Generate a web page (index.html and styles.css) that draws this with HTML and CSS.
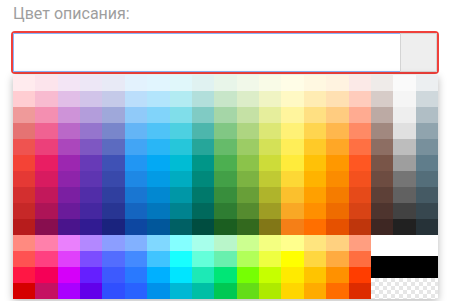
FILE: index.html
```html
<!DOCTYPE html>
<html lang="ru">
<head>
  <meta charset="UTF-8">
  <meta name="viewport" content="width=device-width, initial-scale=1.0">
  <title>Цвет описания</title>
  <link rel="stylesheet" href="styles.css">
</head>
<body>
  <!-- Color field -->
  <div class="color-field">
    <label class="field-label" for="desc-color">Цвет описания:</label>
    <div class="field-box">
      <input type="text" id="desc-color" class="field-input">
      <button class="field-button" type="button"></button>
    </div>

    <!-- Palette dropdown -->
    <div class="palette" id="palette">
      <div class="special">
        <div class="swatch white" title="#ffffff"></div>
        <div class="swatch black" title="#000000"></div>
        <div class="swatch transparent" title="transparent"></div>
      </div>
    </div>
  </div>

<script>
  const palette = [
    ['#ffebee','#ffcdd2','#ef9a9a','#e57373','#ef5350','#f44336','#e53935','#d32f2f','#c62828','#b71c1c','#ff8a80','#ff5252','#ff1744','#d50000'],
    ['#fce4ec','#f8bbd0','#f48fb1','#f06292','#ec407a','#e91e63','#d81b60','#c2185b','#ad1457','#880e4f','#ff80ab','#ff4081','#f50057','#c51162'],
    ['#f3e5f5','#e1bee7','#ce93d8','#ba68c8','#ab47bc','#9c27b0','#8e24aa','#7b1fa2','#6a1b9a','#4a148c','#ea80fc','#e040fb','#d500f9','#aa00ff'],
    ['#ede7f6','#d1c4e9','#b39ddb','#9575cd','#7e57c2','#673ab7','#5e35b1','#512da8','#4527a0','#311b92','#b388ff','#7c4dff','#651fff','#6200ea'],
    ['#e8eaf6','#c5cae9','#9fa8da','#7986cb','#5c6bc0','#3f51b5','#3949ab','#303f9f','#283593','#1a237e','#8c9eff','#536dfe','#3d5afe','#304ffe'],
    ['#e3f2fd','#bbdefb','#90caf9','#64b5f6','#42a5f5','#2196f3','#1e88e5','#1976d2','#1565c0','#0d47a1','#82b1ff','#448aff','#2979ff','#2962ff'],
    ['#e1f5fe','#b3e5fc','#81d4fa','#4fc3f7','#29b6f6','#03a9f4','#039be5','#0288d1','#0277bd','#01579b','#80d8ff','#40c4ff','#00b0ff','#0091ea'],
    ['#e0f7fa','#b2ebf2','#80deea','#4dd0e1','#26c6da','#00bcd4','#00acc1','#0097a7','#00838f','#006064','#84ffff','#18ffff','#00e5ff','#00b8d4'],
    ['#e0f2f1','#b2dfdb','#80cbc4','#4db6ac','#26a69a','#009688','#00897b','#00796b','#00695c','#004d40','#a7ffeb','#64ffda','#1de9b6','#00bfa5'],
    ['#e8f5e9','#c8e6c9','#a5d6a7','#81c784','#66bb6a','#4caf50','#43a047','#388e3c','#2e7d32','#1b5e20','#b9f6ca','#69f0ae','#00e676','#00c853'],
    ['#f1f8e9','#dcedc8','#c5e1a5','#aed581','#9ccc65','#8bc34a','#7cb342','#689f38','#558b2f','#33691e','#ccff90','#b2ff59','#76ff03','#64dd17'],
    ['#f9fbe7','#f0f4c3','#e6ee9c','#dce775','#d4e157','#cddc39','#c0ca33','#afb42b','#9e9d24','#827717','#f4ff81','#eeff41','#c6ff00','#aeea00'],
    ['#fffde7','#fff9c4','#fff59d','#fff176','#ffee58','#ffeb3b','#fdd835','#fbc02d','#f9a825','#f57f17','#ffff8d','#ffff00','#ffea00','#ffd600'],
    ['#fff8e1','#ffecb3','#ffe082','#ffd54f','#ffca28','#ffc107','#ffb300','#ffa000','#ff8f00','#ff6f00','#ffe57f','#ffd740','#ffc400','#ffab00'],
    ['#fff3e0','#ffe0b2','#ffcc80','#ffb74d','#ffa726','#ff9800','#fb8c00','#f57c00','#ef6c00','#e65100','#ffd180','#ffab40','#ff9100','#ff6d00'],
    ['#fbe9e7','#ffccbc','#ffab91','#ff8a65','#ff7043','#ff5722','#f4511e','#e64a19','#d84315','#bf360c','#ff9e80','#ff6e40','#ff3d00','#dd2c00'],
    ['#efebe9','#d7ccc8','#bcaaa4','#a1887f','#8d6e63','#795548','#6d4c41','#5d4037','#4e342e','#3e2723'],
    ['#fafafa','#f5f5f5','#eeeeee','#e0e0e0','#bdbdbd','#9e9e9e','#757575','#616161','#424242','#212121'],
    ['#eceff1','#cfd8dc','#b0bec5','#90a4ae','#78909c','#607d8b','#546e7a','#455a64','#37474f','#263238']
  ];

  const grid = document.getElementById('palette');

  // Columns are hues, rows are shades (50..900, then A100..A700)
  palette.forEach((shades, col) => {
      shades.forEach((color, row) => {
          const cell = document.createElement('div');
          cell.className = 'swatch';
          cell.title = color;
          cell.style.background = color;
          cell.style.gridColumn = col + 1;
          cell.style.gridRow = row + 1;
          grid.appendChild(cell);
      });
  });
</script>
</body>
</html>
```

FILE: styles.css
```css
/* Base Styling */
* {
  margin: 0;
  padding: 0;
  box-sizing: border-box;
}

html, body {
  height: 100%;
  overflow: hidden;
}

body {
  font-family: Roboto, "Noto Sans", Arial, sans-serif;
  background-color: #fff;
}

/* Field */
.color-field {
  display: flex;
  flex-direction: column;
  padding: 4px 0 0 13px;
}

.field-label {
  font-size: 16px;
  line-height: 20px;
  color: #9e9e9e;
}

.field-box {
  display: flex;
  width: 424px;
  height: 39px;
  margin-top: 9px;
  border-radius: 2px;
  box-shadow: 0 0 0 2px #f0403a;
}

.field-input {
  flex: 1;
  min-width: 0;
  border: 1px solid #8ab4f8;
  border-right: none;
  background-color: #fff;
  outline: none;
  font-size: 14px;
  padding: 0 10px;
}

.field-button {
  width: 37px;
  background-color: #eee;
  border: 1px solid #d4d4d4;
  cursor: pointer;
}

/* Palette dropdown */
.palette {
  display: grid;
  grid-template-columns: repeat(19, 1fr);
  grid-template-rows: repeat(14, 16px);
  width: 425px;
  margin-top: 3px;
  background-color: #fff;
  box-shadow: 0 2px 8px rgba(0, 0, 0, 0.28);
}

.swatch {
  cursor: pointer;
}

.special {
  grid-column: 17 / span 3;
  grid-row: 11 / span 4;
  display: grid;
  grid-template-rows: repeat(3, 1fr);
}

.white {
  background-color: #fff;
}

.black {
  background-color: #000;
}

.transparent {
  background-color: #fff;
  background-image: conic-gradient(#e6e6e6 25%, #fff 0 50%, #e6e6e6 0 75%, #fff 0);
  background-size: 8px 8px;
}
```
